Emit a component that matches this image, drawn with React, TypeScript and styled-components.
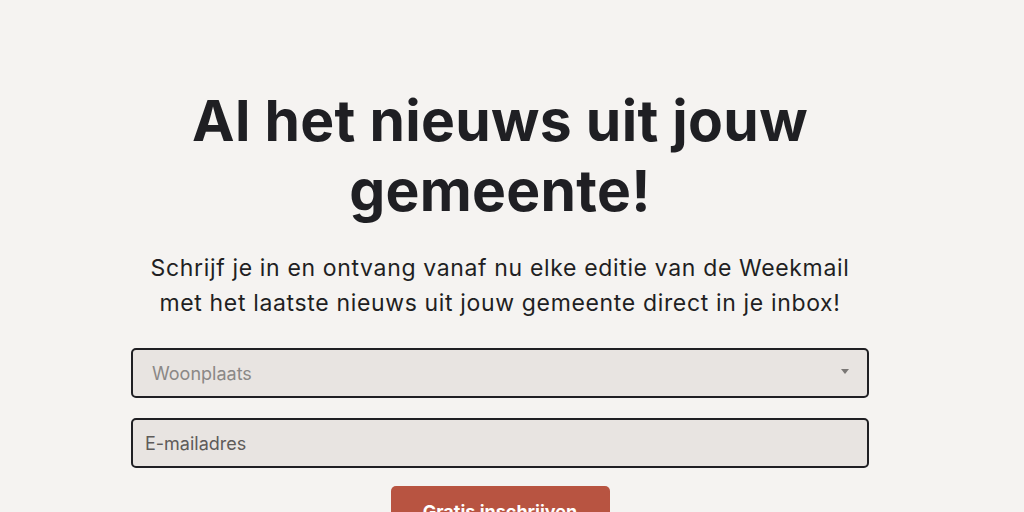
import React from "react";
import styled, { createGlobalStyle } from "styled-components";

const GlobalStyle = createGlobalStyle`
  html, body {
    margin: 0;
    padding: 0;
    background: #f5f3f1;
    font-family: "Inter", "Liberation Sans", sans-serif;
    color: #1f1f23;
  }
`;

const StyledPage = styled.div`
  width: 1000px;
  height: 512px;
  overflow: hidden;
  display: flex;
  flex-direction: column;
  align-items: center;
  padding-top: 86px;
  box-sizing: border-box;
`;

const StyledTitle = styled.h1`
  margin: 0;
  width: 720px;
  text-align: center;
  font-size: 57px;
  line-height: 70px;
  font-weight: 700;
  letter-spacing: 0.3px;
`;

const StyledDesc = styled.p`
  margin: 25px 0 0;
  width: 712px;
  text-align: center;
  font-size: 23px;
  line-height: 35px;
  font-weight: 400;
  letter-spacing: 0.65px;
`;

const StyledForm = styled.form`
  width: 738px;
  margin-top: 27px;
  display: flex;
  flex-direction: column;
  align-items: center;
  gap: 20px;
`;

const StyledField = styled.div<{ $muted?: boolean }>`
  width: 100%;
  height: 50px;
  box-sizing: border-box;
  border: 2px solid #1f1f23;
  border-radius: 5px;
  background: #e8e4e1;
  display: flex;
  align-items: center;
  justify-content: space-between;
  padding: 0 18px 0 ${(p) => (p.$muted ? "19px" : "12px")};
  font-size: 18px;
  color: ${(p) => (p.$muted ? "#8b8886" : "#5e5b59")};
`;

const StyledArrow = styled.span`
  width: 0;
  height: 0;
  border-left: 4px solid transparent;
  border-right: 4px solid transparent;
  border-top: 5px solid #7a7775;
  margin-bottom: 4px;
`;

const StyledButton = styled.button`
  border: none;
  border-radius: 5px;
  background: #b85441;
  color: white;
  font-family: inherit;
  font-weight: 700;
  font-size: 18px;
  width: 219px;
  height: 50px;
  margin-top: -2px;
  padding: 0;
`;

const App: React.FC = () => {
  return (
    <>
      <GlobalStyle />
      <StyledPage>
        <StyledTitle>Al het nieuws uit jouw gemeente!</StyledTitle>
        <StyledDesc>
          Schrijf je in en ontvang vanaf nu elke editie van de Weekmail met het
          laatste nieuws uit jouw gemeente direct in je inbox!
        </StyledDesc>
        <StyledForm>
          <StyledField $muted>
            Woonplaats
            <StyledArrow />
          </StyledField>
          <StyledField>E-mailadres</StyledField>
          <StyledButton type="button">Gratis inschrijven</StyledButton>
        </StyledForm>
      </StyledPage>
    </>
  );
};

export default App;
